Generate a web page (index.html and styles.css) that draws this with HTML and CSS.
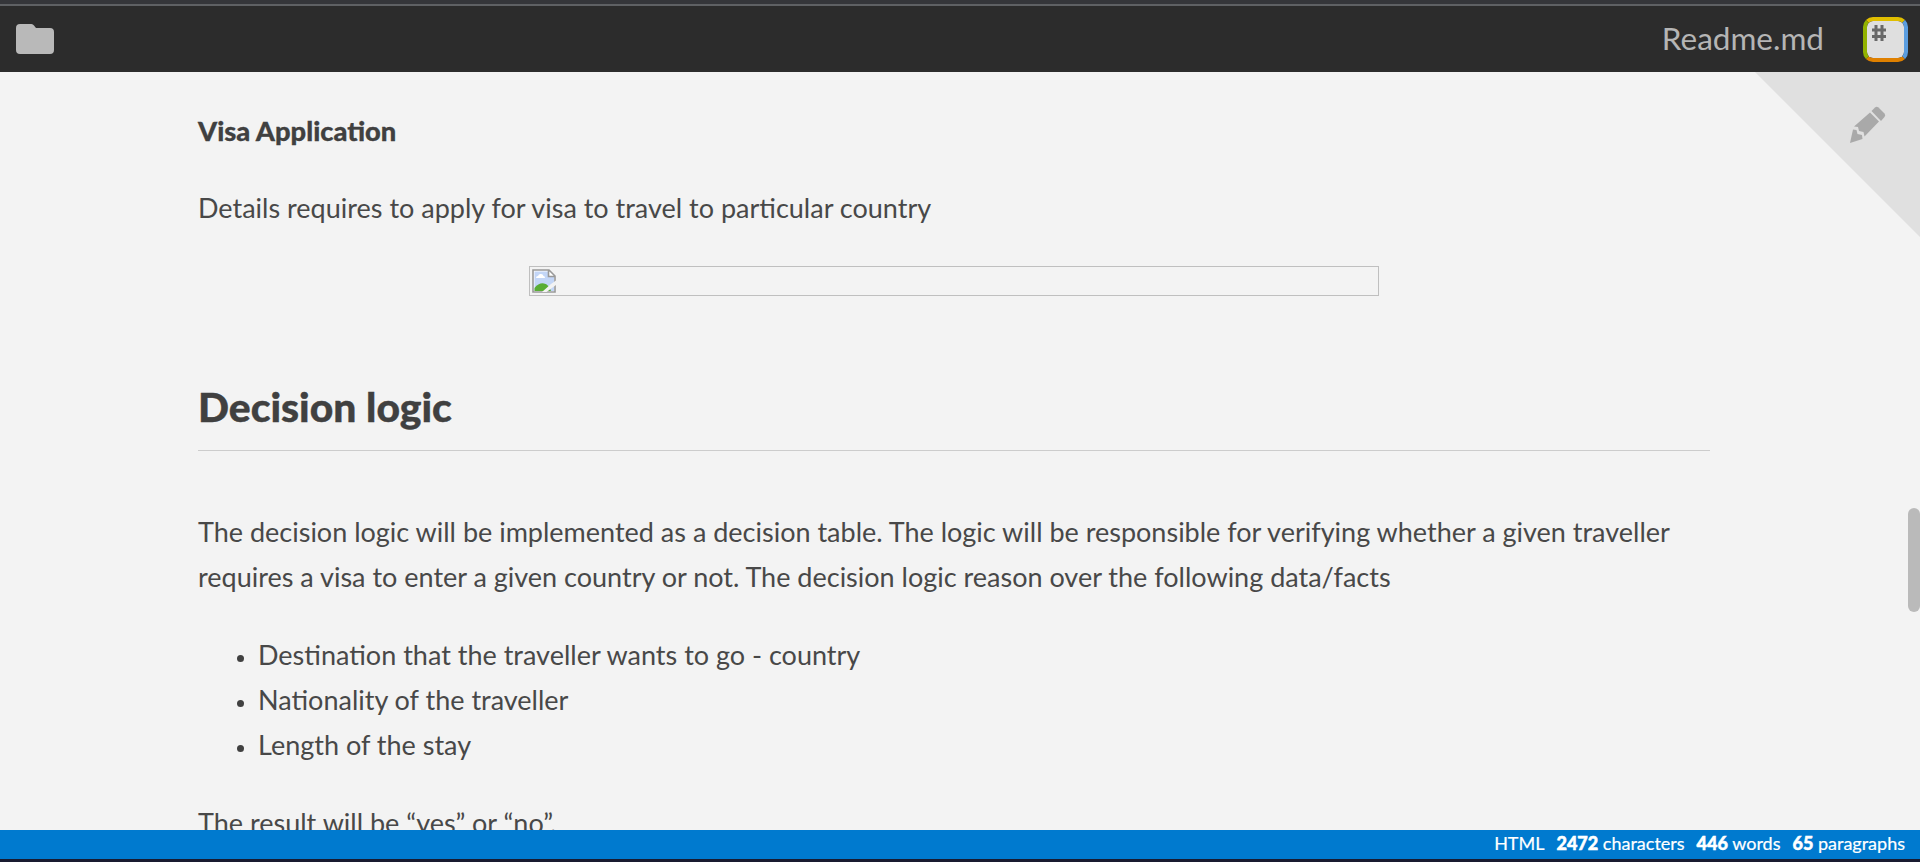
FILE: index.html
```
<!DOCTYPE html>
<html lang="en">
<head>
<meta charset="utf-8">
<title>Readme.md</title>
<link rel="stylesheet" href="styles.css">
</head>
<body>
<div class="app">
  <header class="navbar">
    <svg class="folder" viewBox="0 0 38 30"><path d="M4 0H15.5Q17 0 18 1.5L20 4H34Q38 4 38 8V26Q38 30 34 30H4Q0 30 0 26V4Q0 0 4 0Z"/></svg>
    <span class="title">Readme.md</span>
    <div class="logo"><svg viewBox="0 0 14 18"><path d="M4 1V17M10 1V17M0 6H14M0 12.5H14"/></svg></div>
  </header>
  <main class="preview">
    <article class="content">
      <h4 class="subheading">Visa Application</h4>
      <p class="text">Details requires to apply for visa to travel to particular country</p>
      <div class="picture">
        <svg viewBox="0 0 24 24">
          <path fill="#fff" d="M1 1H17L23 7V23H1Z"/>
          <path fill="#c3d6f7" d="M2.5 2.5H16V8H22V22H2.5Z"/>
          <path fill="#fff" d="M4 9Q4 7 6 7Q7 4.500 9 5Q11 5 11.500 7Q13 7 13 9Z"/>
          <path fill="#59ad35" d="M2.500 22V19Q7 13.500 12 14.500Q17 15.500 19 22Z"/>
          <path fill="none" stroke="#999" stroke-width="1.6" d="M1 1H17L23 7V23H1ZM16.500 1V7.500H23"/>
          <path fill="#f3f3f3" d="M24 11.500L19 15L10 23H14.500L24 16Z"/>
        </svg>
      </div>
      <h2 class="heading">Decision logic</h2>
      <p class="text">The decision logic will be implemented as a decision table. The logic will be responsible for verifying whether a given traveller requires a visa to enter a given country or not. The decision logic reason over the following data/facts</p>
      <ul class="list">
        <li>Destination that the traveller wants to go - country</li>
        <li>Nationality of the traveller</li>
        <li>Length of the stay</li>
      </ul>
      <p class="text">The result will be “yes” or “no”.</p>
    </article>
    <div class="corner">
      <svg viewBox="0 0 165 165"><path fill="#e0e0e0" d="M0 0H165V165Z"/>
        <g fill="#a9a9a9"><path d="M115 40.500L124 49.500L109.500 64.500L108.500 60L104 59L103 55L99 54.500Z"/><path d="M116.500 39L120 35.500Q121.500 34 123.500 35.500L129.500 41.500Q131 43 129.500 45L126 49Z"/><path d="M95 71L98 57.500L101.500 58L102.500 62L107 63L107.500 67Z"/></g>
      </svg>
    </div>
    <div class="thumb"></div>
  </main>
  <footer class="status"><span>HTML</span><span><b>2472</b> characters</span><span><b>446</b> words</span><span><b>65</b> paragraphs</span></footer>
</div>
</body>
</html>
```
FILE: styles.css
```
* { box-sizing: border-box; }
body { margin: 0; background: #191925; font-family: Lato, "Liberation Sans", sans-serif; overflow: hidden; }
.app { height: 862px; display: flex; flex-direction: column; border-top: 4px solid #35363a; border-bottom: 3px solid #191b30; }
.navbar { height: 68px; flex: none; display: flex; align-items: center; background: #2c2c2c; border-top: 2px solid #5f6164; padding: 0 12px 0 15.5px; }
.folder { width: 38px; height: 30px; fill: #b9b9b9; }
.title { margin-left: auto; margin-right: 39px; padding-bottom: 2px; color: #b5b5b5; font-size: 31.5px; line-height: 40px; }
.logo { width: 45px; height: 45px; border: 4px solid; border-color: #e0be00 #5a9de0 #df8000 #92b200; border-radius: 10px; background: linear-gradient(#dfdfdf, #dfdfdf) padding-box; padding: 3px 0 0 5px; }
.logo svg { display: block; width: 14px; height: 18px; fill: none; stroke: #696969; stroke-width: 3; }
.preview { position: relative; flex: 1; min-height: 0; overflow: hidden; background: #f3f3f3; }
.content { width: 1512px; margin-left: 198px; padding-top: 36px; color: #484848; font-size: 27px; line-height: 45px; }
.subheading { margin: 0 0 32px; color: #404040; font-size: 27px; font-weight: 900; letter-spacing: 0; word-spacing: 0; font-size: 27.3px; -webkit-text-stroke: 0.3px #404040; }
.text { margin: 0; }
.picture { width: 850px; height: 30px; margin: 36px auto 0; border: 1px solid #bfbfbf; padding: 2px; }
.picture svg { display: block; width: 24px; height: 24px; }
.heading { margin: 82px 0 58px; height: 73px; border-bottom: 1px solid #ccc; color: #404040; font-size: 40.8px; line-height: 57px; font-weight: 900; -webkit-text-stroke: 0.4px #404040; }
.list { margin: 33px 0; padding-left: 60px; list-style: none; }
.list li { display: flex; align-items: center; }
.list li::before { content: ""; flex: none; width: 7px; height: 7px; margin: 7px 14px 0 -21px; border-radius: 50%; background: #404040; }
.corner { position: absolute; top: 0; right: 0; width: 165px; height: 165px; }
.corner svg { display: block; width: 165px; height: 165px; }
.thumb { position: absolute; right: 0; top: 436px; width: 12px; height: 104px; border-radius: 6px; background: #bababa; }
.status { height: 29px; flex: none; display: flex; justify-content: flex-end; gap: 12px; background: #007acf; color: #fff; font-size: 18px; line-height: 27px; padding-right: 15px; -webkit-text-stroke: 0.2px #fff; }
.status b { font-weight: 900; -webkit-text-stroke: 0.5px #fff; }
```
